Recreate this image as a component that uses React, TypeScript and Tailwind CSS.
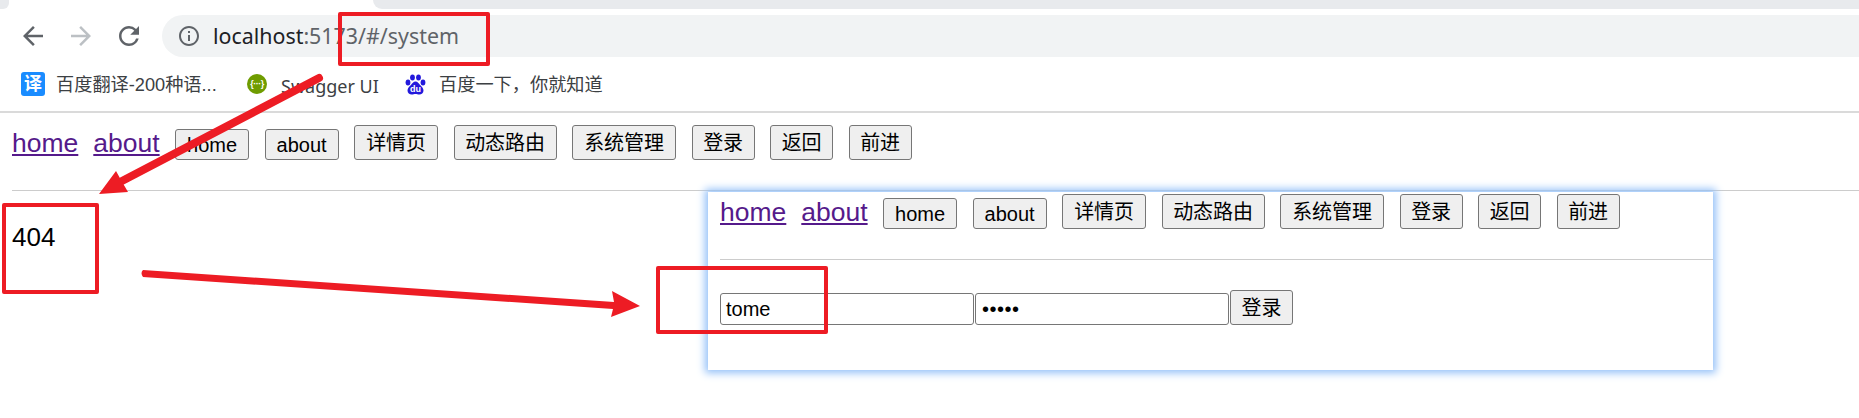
import React from "react";
import { MdArrowBack, MdArrowForward, MdInfoOutline, MdRefresh } from "react-icons/md";

const font = "font-['Liberation_Sans','Noto_Sans_CJK_SC',sans-serif]";

const navButtons = [
  { label: "home", className: "w-[74px] h-[31px]" },
  { label: "about", className: "w-[74px] h-[31px]" },
  { label: "详情页", className: "w-[84px] h-[35px]" },
  { label: "动态路由", className: "w-[103px] h-[35px]" },
  { label: "系统管理", className: "w-[104px] h-[35px]" },
  { label: "登录", className: "w-[63px] h-[35px]" },
  { label: "返回", className: "w-[63px] h-[35px]" },
  { label: "前进", className: "w-[63px] h-[35px]" },
];

function PlainButton({ label, className }: { label: string; className: string }) {
  return (
    <button className={`flex items-center justify-center shrink-0 rounded-[3px] border border-[#767676] bg-[#efefef] text-[20px] leading-none text-black ${className}`}>
      {label}
    </button>
  );
}

function Nav() {
  return (
    <div className="flex items-end">
      <a className="mb-[2px] text-[26.5px] leading-[30px] text-[#551a8b] underline">home</a>
      <a className="mb-[2px] ml-[15px] text-[26.5px] leading-[30px] text-[#551a8b] underline">about</a>
      <div className="ml-[15.5px] flex items-end gap-[15.5px]">
        {navButtons.map((b) => (
          <PlainButton key={b.label} label={b.label} className={b.className} />
        ))}
      </div>
    </div>
  );
}

function BaiduIcon() {
  return (
    <svg width="21" height="21" viewBox="0 0 21 21" className="shrink-0">
      <g fill="#2319dc">
        <ellipse cx="3" cy="8.5" rx="2.4" ry="2.9" />
        <ellipse cx="7.5" cy="3.6" rx="2.4" ry="3" />
        <ellipse cx="13.5" cy="3.6" rx="2.4" ry="3" />
        <ellipse cx="18" cy="8.5" rx="2.4" ry="2.9" />
        <path d="M10.5 7.5c-2.2 0-3.2 2-4.6 3.4C4.2 12.500 2.500 14 2.500 16.500c0 2.500 2 4 4.200 4 1.600 0 2.400-.5 3.800-.5s2.200.5 3.800.5c2.200 0 4.200-1.500 4.200-4 0-2.500-1.700-4-3.400-5.600C13.700 9.500 12.700 7.500 10.500 7.500z" />
      </g>
      <text x="10.500" y="18" textAnchor="middle" fontSize="9" fontWeight="700" fill="#fff" fontFamily="Liberation Sans">du</text>
    </svg>
  );
}

function Bookmarks() {
  return (
    <div className="flex h-[54px] items-center pl-[21px] text-[18.2px] text-[#3c4043]">
      <span className="flex h-[24px] w-[24px] shrink-0 items-center justify-center rounded-[3px] bg-[#1a8cff] text-[18px] leading-none font-bold text-white">译</span>
      <span className="mt-[4px] ml-[11px] w-[191px] whitespace-nowrap">百度翻译-200种语...</span>
      <span className="flex h-[20px] w-[20px] shrink-0 items-center justify-center rounded-full bg-[#6f9c00] text-[9px] leading-none font-bold tracking-[-0.5px] text-white">{"{···}"}</span>
      <span className="mt-[4px] ml-[14px] w-[124px] whitespace-nowrap font-['Noto_Sans',sans-serif] text-[18px]">Swagger UI</span>
      <BaiduIcon />
      <span className="mt-[4px] ml-[13px] whitespace-nowrap">百度一下，你就知道</span>
    </div>
  );
}

function Annotations() {
  return (
    <>
      <svg width="1859" height="418" viewBox="0 0 1859 418" className="pointer-events-none absolute top-0 left-0">
        <path d="M319 78 L122 181" stroke="#ed1c24" strokeWidth="8" strokeLinecap="round" fill="none" />
        <path d="M99 194 L116 171 L121 180 L128 192 Z" fill="#ed1c24" />
        <path d="M143 270 L614 302 L612 291 L640 306 L611 317 L613 309 L143 277 Q140 273 143 270 Z" fill="#ed1c24" />
      </svg>
      <div className="pointer-events-none absolute top-[12px] left-[338px] h-[54px] w-[152px] rounded-[2px] border-[4px] border-[#ed1c24]" />
      <div className="pointer-events-none absolute top-[203px] left-[2px] h-[91px] w-[97px] rounded-[2px] border-[4px] border-[#ed1c24]" />
      <div className="pointer-events-none absolute top-[266px] left-[656px] h-[68px] w-[172px] rounded-[2px] border-[4px] border-[#ed1c24]" />
    </>
  );
}

export default function App() {
  return (
    <div className={`relative h-[418px] w-[1859px] overflow-hidden bg-white ${font}`}>
      {/* browser chrome */}
      <div className="flex h-[10px] justify-between">
        <div className="h-[9px] w-[9px] rounded-br-[6px] bg-[#e8eaed]" />
        <div className="h-[9px] w-[1486px] rounded-bl-[10px] bg-[#e8eaed]" />
      </div>
      <div className="mt-[5px] flex h-[42px] items-center">
        <MdArrowBack size={30} className="ml-[18px] text-[#5f6368]" />
        <MdArrowForward size={30} className="ml-[18px] text-[#bcc0c4]" />
        <MdRefresh size={30} className="ml-[18px] text-[#5f6368]" />
        <div className="ml-[18px] flex h-[42px] flex-1 items-center rounded-l-full bg-[#f1f3f4] pl-[15px]">
          <MdInfoOutline size={24} className="text-[#5f6368]" />
          <span className="ml-[12px] font-['Noto_Sans',sans-serif] text-[21.4px] text-[#5f6368]">
            <span className="text-[#202124]">localhost</span>:5173/#/system
          </span>
        </div>
      </div>
      <Bookmarks />
      <div className="h-[2px] bg-[#dadada]" />

      {/* page */}
      <div className="pt-[12px] pl-[12px]">
        <Nav />
      </div>
      <div className="mt-[30px] ml-[12px] h-px bg-[#cccccc]" />
      <div className="mt-[31px] ml-[12px] text-[26px] leading-[30px] text-black">404</div>

      {/* pasted screenshot */}
      <div className="absolute top-[192px] left-[708px] h-[178px] w-[1005px] bg-white shadow-[0_0_8px_3px_#93c0f8]">
        <div className="pt-[2px] pl-[12px]">
          <Nav />
        </div>
        <div className="mt-[30px] ml-[12px] h-px bg-[#cccccc]" />
        <div className="mt-[30px] ml-[12px] flex items-end">
          <div className="flex h-[32px] w-[254px] items-center rounded-[3px] border border-[#767676] pl-[5px] text-[20px] text-black">tome</div>
          <div className="ml-[1px] flex h-[32px] w-[254px] items-center rounded-[3px] border border-[#767676] pl-[6px] text-[20px] leading-none tracking-[0.5px] text-black">•••••</div>
          <PlainButton label="登录" className="ml-[1px] h-[35px] w-[63px]" />
        </div>
      </div>

      <Annotations />
    </div>
  );
}
